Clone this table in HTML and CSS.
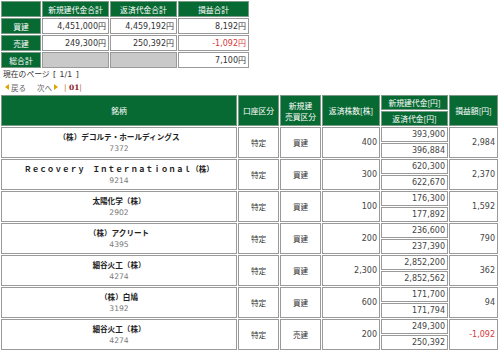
FILE: index.html
```html
<!DOCTYPE html>
<html lang="ja">
<head>
<meta charset="utf-8">
<link rel="stylesheet" href="styles.css">
</head>
<body>
<table class="sum">
  <colgroup><col class="c-lab"><col class="c-a"><col class="c-a"><col class="c-b"></colgroup>
  <tr><th></th><th>新規建代金合計</th><th>返済代金合計</th><th>損益合計</th></tr>
  <tr><th>買建</th><td>4,451,000円</td><td>4,459,192円</td><td>8,192円</td></tr>
  <tr><th>売建</th><td>249,300円</td><td>250,392円</td><td class="neg">-1,092円</td></tr>
  <tr><th>総合計</th><td class="blank"></td><td class="blank"></td><td>7,100円</td></tr>
</table>
<div class="page">現在のページ [ 1/1 ]</div>
<div class="nav">
  <span class="nv"><svg class="tri" viewBox="0 0 4 6" width="4" height="6"><path d="M4 0 L0 3 L4 6 Z"/></svg>戻る</span>
  <span class="nv nx">次へ<svg class="tri" viewBox="0 0 4 6" width="4" height="6"><path d="M0 0 L4 3 L0 6 Z"/></svg></span>
  <span class="pg"><span class="bar">|</span> <b>01</b><span class="bar">|</span></span>
</div>
<table class="list">
  <colgroup><col class="w1"><col class="w2"><col class="w3"><col class="w4"><col class="w5"><col class="w6"></colgroup>
  <tr><th rowspan="2">銘柄</th><th rowspan="2">口座区分</th><th rowspan="2">新規建<br>売買区分</th><th rowspan="2">返済株数[株]</th><th>新規建代金[円]</th><th rowspan="2">損益額[円]</th></tr>
  <tr><th>返済代金[円]</th></tr>

  <tr><td rowspan="2" class="nm"><b>（株）デコルテ・ホールディングス</b><span>7372</span></td><td rowspan="2" class="ct">特定</td><td rowspan="2" class="ct">買建</td><td rowspan="2" class="num">400</td><td class="num">393,900</td><td rowspan="2" class="num">2,984</td></tr>
  <tr><td class="num">396,884</td></tr>

  <tr><td rowspan="2" class="nm"><b>Ｒｅｃｏｖｅｒｙ　Ｉｎｔｅｒｎａｔｉｏｎａｌ（株）</b><span>9214</span></td><td rowspan="2" class="ct">特定</td><td rowspan="2" class="ct">買建</td><td rowspan="2" class="num">300</td><td class="num">620,300</td><td rowspan="2" class="num">2,370</td></tr>
  <tr><td class="num">622,670</td></tr>

  <tr><td rowspan="2" class="nm"><b>太陽化学（株）</b><span>2902</span></td><td rowspan="2" class="ct">特定</td><td rowspan="2" class="ct">買建</td><td rowspan="2" class="num">100</td><td class="num">176,300</td><td rowspan="2" class="num">1,592</td></tr>
  <tr><td class="num">177,892</td></tr>

  <tr><td rowspan="2" class="nm"><b>（株）アクリート</b><span>4395</span></td><td rowspan="2" class="ct">特定</td><td rowspan="2" class="ct">買建</td><td rowspan="2" class="num">200</td><td class="num">236,600</td><td rowspan="2" class="num">790</td></tr>
  <tr><td class="num">237,390</td></tr>

  <tr><td rowspan="2" class="nm"><b>細谷火工（株）</b><span>4274</span></td><td rowspan="2" class="ct">特定</td><td rowspan="2" class="ct">買建</td><td rowspan="2" class="num">2,300</td><td class="num">2,852,200</td><td rowspan="2" class="num">362</td></tr>
  <tr><td class="num">2,852,562</td></tr>

  <tr><td rowspan="2" class="nm"><b>（株）白鳩</b><span>3192</span></td><td rowspan="2" class="ct">特定</td><td rowspan="2" class="ct">買建</td><td rowspan="2" class="num">600</td><td class="num">171,700</td><td rowspan="2" class="num">94</td></tr>
  <tr><td class="num">171,794</td></tr>

  <tr><td rowspan="2" class="nm"><b>細谷火工（株）</b><span>4274</span></td><td rowspan="2" class="ct">特定</td><td rowspan="2" class="ct">売建</td><td rowspan="2" class="num">200</td><td class="num">249,300</td><td rowspan="2" class="num neg">-1,092</td></tr>
  <tr><td class="num">250,392</td></tr>
</table>
</body>
</html>
```

FILE: styles.css
```css
html, body {
  margin: 0;
  padding: 0;
  background: #fff;
}
body {
  font-family: "DejaVu Sans", "Noto Sans CJK JP", sans-serif;
  font-size: 7.5px;
  color: #333;
}
table {
  border-collapse: separate;
  border-spacing: 1px;
  table-layout: fixed;
}
th, td {
  border: 1px solid #9a9a9a;
  padding: 0 2px;
  box-sizing: border-box;
}
th {
  background: #086a33;
  color: #fff;
  font-weight: normal;
  text-align: center;
  border-color: #7a9a85;
  font-family: "Noto Sans CJK JP", sans-serif;
  font-size: 7.8px;
}
.sum {
  width: 250px;
}
.sum .c-lab { width: 40px; }
.sum .c-a { width: 67px; }
.sum .c-b { width: 71px; }
.sum tr { height: 16px; }
.sum th, .sum td {
  line-height: 11px;
}
.sum td {
  text-align: right;
  font-size: 8px;
}
.sum td.blank {
  background: #c9c9c9;
}
.neg {
  color: #d8373b;
}
.page {
  margin: 0 0 0 3px;
  height: 11px;
  line-height: 11px;
  font-size: 7.8px;
  word-spacing: 1px;
}
.nav {
  display: flex;
  align-items: center;
  height: 12px;
  margin: 1px 0 0 5px;
  color: #666;
  font-family: "Noto Sans CJK JP", sans-serif;
}
.nv {
  display: inline-flex;
  align-items: center;
  gap: 2px;
}
.nx {
  margin-left: 11px;
}
.tri {
  fill: #e0a400;
}
.pg {
  margin-left: 6px;
  font-family: "DejaVu Serif", serif;
}
.pg .bar {
  color: #c4661c;
}
.pg b {
  color: #8a1c1c;
}
.list {
  width: 499px;
  margin-top: 1px;
}
.list .w1 { width: 236px; }
.list .w2 { width: 41px; }
.list .w3 { width: 41px; }
.list .w4 { width: 58px; }
.list .w5 { width: 67px; }
.list .w6 { width: 49px; }
.list tr { height: 15px; }
.list th {
  line-height: 11px;
}
.list td {
  font-size: 8px;
  line-height: 11px;
  vertical-align: middle;
}
.list td.nm {
  text-align: center;
  font-family: "Noto Sans CJK JP", sans-serif;
  font-size: 7.6px;
  line-height: 12px;
}
.list td.nm b {
  display: block;
  color: #222;
}
.list td.nm span {
  display: block;
  color: #777;
  font-family: "DejaVu Sans", sans-serif;
}
.list td.ct {
  text-align: center;
  font-family: "Noto Sans CJK JP", sans-serif;
  font-size: 7.6px;
}
.list td.num {
  text-align: right;
  color: #444;
}
.list td.neg {
  color: #d8373b;
}
```
